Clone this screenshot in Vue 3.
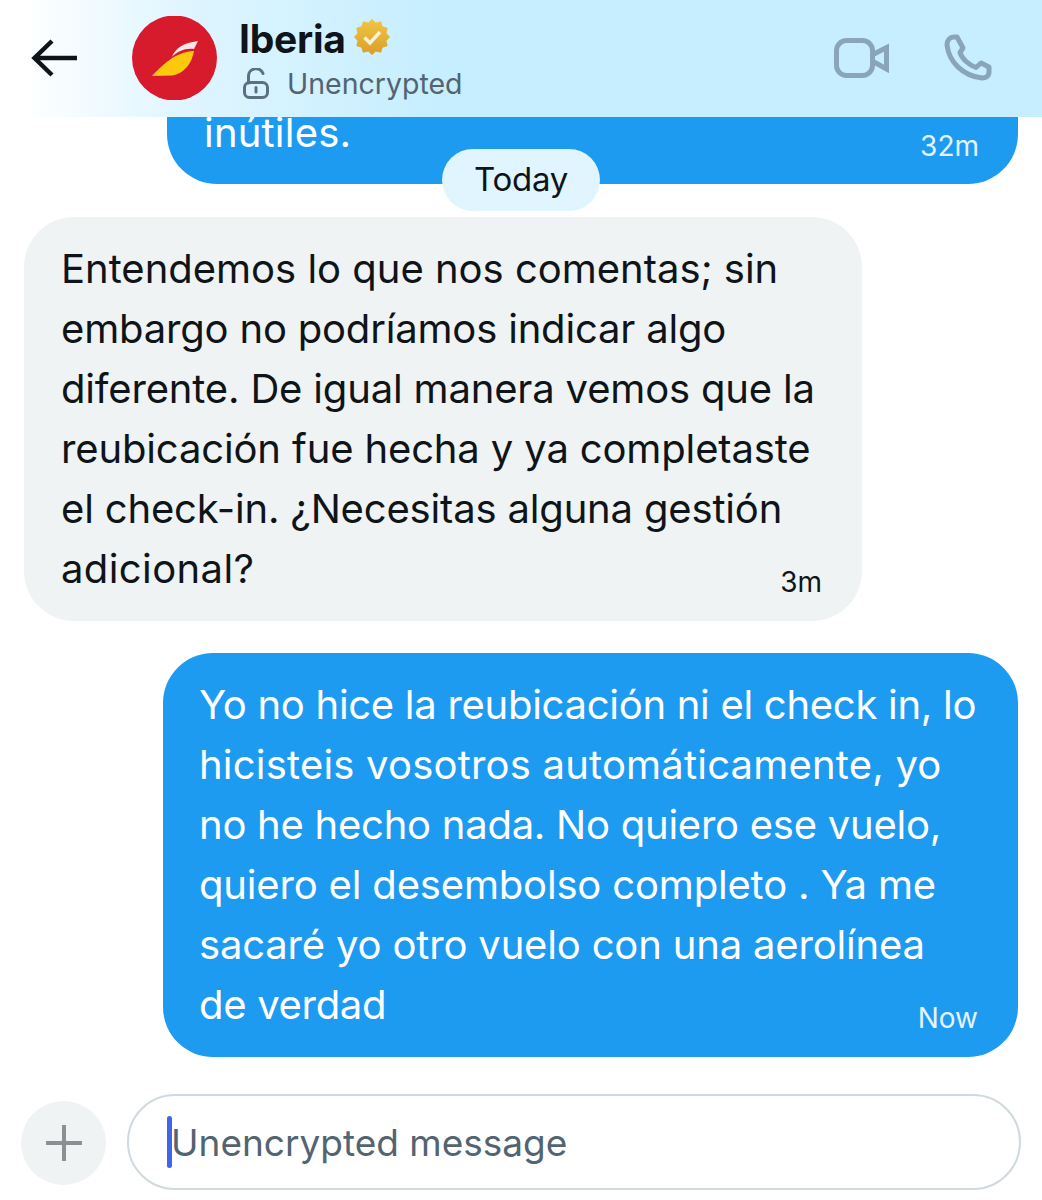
<script setup>
const grayLines = [
  { t: 'Entendemos lo que nos comentas; sin', ls: -0.01 },
  { t: 'embargo no podríamos indicar algo', ls: -0.18 },
  { t: 'diferente. De igual manera vemos que la', ls: -0.17 },
  { t: 'reubicación fue hecha y ya completaste', ls: -0.14 },
  { t: 'el check-in. ¿Necesitas alguna gestión', ls: -0.17 },
]
const blueLines = [
  { t: 'Yo no hice la reubicación ni el check in, lo', ls: -0.28 },
  { t: 'hicisteis vosotros automáticamente, yo', ls: 0.2 },
  { t: 'no he hecho nada. No quiero ese vuelo,', ls: -0.25 },
  { t: 'quiero el desembolso completo . Ya me', ls: -0.17 },
  { t: 'sacaré yo otro vuelo con una aerolínea', ls: -0.17 },
]
const spacing = (ls) => ({ letterSpacing: ls + 'px' })

// 12-point rounded seal for the verified badge
const seal = (() => {
  const n = 12, cx = 18, cy = 18, R = 17.5, r = 14.5
  let d = ''
  for (let i = 0; i < n; i++) {
    const a = (i / n) * Math.PI * 2 - Math.PI / 2
    const b = ((i + 0.5) / n) * Math.PI * 2 - Math.PI / 2
    d += `${i ? 'L' : 'M'}${(cx + R * Math.cos(a)).toFixed(2)} ${(cy + R * Math.sin(a)).toFixed(2)}`
    d += `L${(cx + r * Math.cos(b)).toFixed(2)} ${(cy + r * Math.sin(b)).toFixed(2)}`
  }
  return d + 'Z'
})()
</script>

<template>
  <div class="screen">
    <header class="head">
      <svg class="back" viewBox="0 0 46 40" width="46" height="40">
        <path d="M46 20H4M21 3 3.5 20 21 37" fill="none" stroke="#0f1419" stroke-width="4.5" />
      </svg>
      <div class="avatar">
        <svg viewBox="0 0 86 84" width="86" height="84">
          <circle cx="42.5" cy="42" r="42.5" fill="#d71a2c" />
          <path d="M20 60C30 50 42 36 62 35 60 47 52 58 40 59.500Z" fill="#fdc90d" />
          <path d="M40 41C43 33 50 27 66 25L62 33C53 32 46 35 40 41Z" fill="#f9e6e6" />
        </svg>
      </div>
      <div class="who">
        <div class="name-row">
          <span class="name">Iberia</span>
          <svg class="badge" viewBox="0 0 36 36" width="36" height="36">
            <defs>
              <linearGradient id="gold" x1="0" y1="0" x2="0" y2="1">
                <stop offset="0" stop-color="#f0c544" />
                <stop offset="1" stop-color="#d99f2a" />
              </linearGradient>
            </defs>
            <path :d="seal" fill="url(#gold)" stroke="url(#gold)" stroke-width="1" stroke-linejoin="round" />
            <path d="M10.500 18.500l5.500 5.500 10-11" fill="none" stroke="#f6efd9" stroke-width="3.500" />
          </svg>
        </div>
        <div class="status">
          <svg viewBox="0 0 27 31" width="27" height="31">
            <path d="M5.500 15V8a7.500 7.500 0 0 1 14.500-2.500" fill="none" stroke="#5b7083" stroke-width="3" stroke-linecap="round" />
            <rect x="1.500" y="14.500" width="23" height="15" rx="5" fill="none" stroke="#5b7083" stroke-width="3" />
            <path d="M13 19.500V24" stroke="#5b7083" stroke-width="3" stroke-linecap="round" />
          </svg>
          <span>Unencrypted</span>
        </div>
      </div>
      <div class="actions">
        <svg viewBox="0 0 57 44" width="57" height="44">
          <rect x="3.500" y="4.500" width="36" height="35" rx="10" fill="none" stroke="#8aa5b9" stroke-width="5" />
          <path d="M41 18 53.500 11.500V33L41 26" fill="none" stroke="#8aa5b9" stroke-width="5" />
        </svg>
        <svg viewBox="0 0 48 48" width="48" height="48">
          <path d="M10 3H13L19 14 16 18.500C18 25 25 31 32 33.500L37 29 45 33V38C45 42 42 44 38 44 19 42 5 28 3 11 3 6 6 3 10 3Z" fill="none" stroke="#8aa5b9" stroke-width="5" stroke-linejoin="round" />
        </svg>
      </div>
    </header>

    <main class="chat">
      <div class="top-wrap">
        <div class="bubble blue clipped">
          <span class="clip-text">inútiles.</span>
          <span class="time clip-time">32m</span>
        </div>
        <div class="today">Today</div>
      </div>

      <div class="bubble gray">
        <div v-for="l in grayLines" :key="l.t" class="line" :style="spacing(l.ls)">{{ l.t }}</div>
        <div class="line last"><span :style="spacing(0.4)">adicional?</span><span class="time">3m</span></div>
      </div>

      <div class="bubble blue full">
        <div v-for="l in blueLines" :key="l.t" class="line" :style="spacing(l.ls)">{{ l.t }}</div>
        <div class="line last"><span>de verdad</span><span class="time">Now</span></div>
      </div>
    </main>

    <footer class="composer">
      <button class="plus" aria-label="Add">
        <svg viewBox="0 0 36 36" width="36" height="36">
          <path d="M18 0V36M0 18H36" stroke="#8b8e92" stroke-width="4" fill="none" />
        </svg>
      </button>
      <div class="input">
        <i class="caret"></i>
        <span>Unencrypted message</span>
      </div>
    </footer>
  </div>
</template>

<style>
html, body { margin: 0; background: #fff; }
</style>

<style scoped>
.screen {
  width: 1042px;
  height: 1200px;
  overflow: hidden;
  background: #fff;
  color: #0f1419;
  font-family: Inter, "Liberation Sans", sans-serif;
  display: flex;
  flex-direction: column;
}
.head {
  position: relative;
  z-index: 2;
  height: 117px;
  flex: none;
  display: flex;
  align-items: center;
  padding: 0 50px 0 31px;
  box-sizing: border-box;
  background: linear-gradient(90deg, #fff 2%, #dff5ff 18%, #c6eeff 42%, #c6eeff 100%);
}
.back { flex: none; margin-top: -1px; }
.avatar { width: 86px; height: 84px; margin-left: 55px; flex: none; display: flex; margin-top: -1px; }
.who { margin-left: 21px; flex: 1; display: flex; flex-direction: column; margin-top: 5px; }
.name-row { display: flex; align-items: center; gap: 8px; height: 46px; margin-top: -3px; }
.name { font-size: 39px; font-weight: 700; letter-spacing: -0.25px; }
.badge { margin-top: -3px; }
.status { display: flex; align-items: center; gap: 17px; margin: 2px 0 0 4px; height: 40px; color: #536471; font-size: 28.500px; }
.actions { display: flex; align-items: center; gap: 54px; margin-top: -1px; }

.chat { flex: 1; display: flex; flex-direction: column; }
.top-wrap { position: relative; height: 100px; display: flex; justify-content: flex-end; padding-right: 24px; }
.bubble { box-sizing: border-box; border-radius: 50px; font-size: 40px; line-height: 60px; letter-spacing: -0.3px; }
.line { white-space: nowrap; }
.line.last { display: flex; justify-content: space-between; align-items: flex-end; }
.time { font-size: 28px; line-height: 34px; letter-spacing: 0; }
.blue { background: #1d9bf0; color: #fff; }
.clipped {
  width: 851px;
  height: 147px;
  margin-top: -80px;
  display: flex;
  justify-content: space-between;
  align-items: flex-end;
  padding: 0 39px 22px 38px;
}
.clip-text { letter-spacing: 0.2px; margin-bottom: -1px; margin-left: -1px; line-height: 60px; }
.clip-time { margin-bottom: -1px; color: #e4f3fd; }
.today {
  position: absolute;
  left: 442px;
  top: 32px;
  width: 158px;
  height: 62px;
  border-radius: 31px;
  background: #e0f5ff;
  display: flex;
  align-items: center;
  justify-content: center;
  font-size: 33px;
  padding-bottom: 2px;
  box-sizing: border-box;
  letter-spacing: -0.3px;
}
.gray { background: #eff3f4; width: 838px; height: 404px; margin-left: 24px; padding: 22px 40px 21px 37px; }
.full { width: 855px; height: 404px; margin: 32px 0 0 163px; padding: 22px 40px 22px 36px; }
.gray .time { color: #0f1419; }
.full .time { color: #e4f3fd; }

.composer { flex: 1; display: flex; align-items: flex-end; gap: 21px; padding: 0 21px 10px; box-sizing: border-box; }
.plus { width: 85px; height: 84px; margin-bottom: 5px; border: 0; border-radius: 50%; background: #eff3f4; display: flex; align-items: center; justify-content: center; padding: 0; }
.input {
  width: 894px;
  height: 96px;
  box-sizing: border-box;
  border: 2px solid #cfd9de;
  border-radius: 48px;
  display: flex;
  align-items: center;
  padding-left: 38px;
  font-size: 37px;
  color: #536471;
}
.caret { width: 5px; height: 52px; border-radius: 3px; background: #3f66e8; margin-right: -1px; }
</style>
